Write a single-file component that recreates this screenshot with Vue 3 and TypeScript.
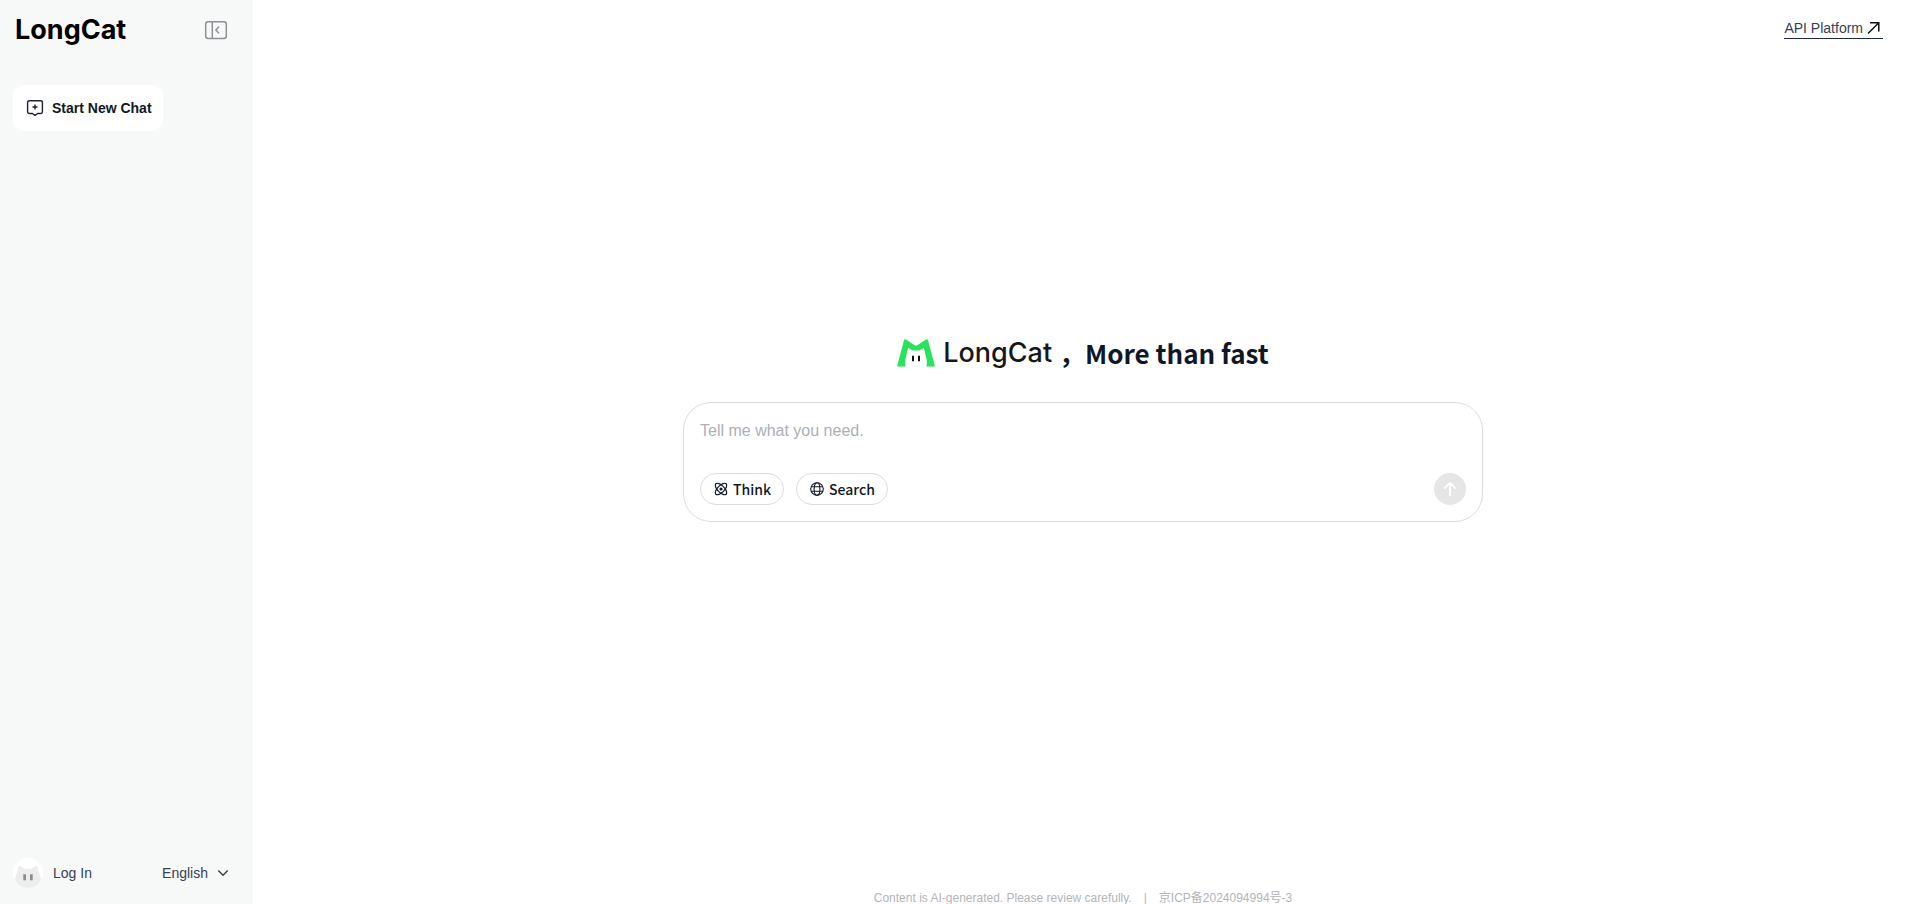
<script setup lang="ts">
import { ref } from 'vue'

const message = ref('')
const think = ref(false)
const search = ref(false)
</script>

<template>
  <div class="app">
    <aside class="sidebar">
      <header class="side-head">
        <a class="wordmark" href="#">LongCat</a>
        <button class="plain" type="button" aria-label="Collapse sidebar">
          <svg width="24" height="20" viewBox="0 0 24 20" fill="none" stroke="#8e9098" stroke-width="1.5">
            <rect x="1.7" y="1.7" width="20.6" height="16.8" rx="2.5" />
            <path d="M8.3 1.7v16.8" />
            <path d="M14.9 6.7l-3 3.3 3 3.3" />
          </svg>
        </button>
      </header>
      <button class="new-chat" type="button">
        <svg width="18" height="18" viewBox="0 0 18 18" fill="none" stroke="#1d2433" stroke-width="1.4" stroke-linejoin="round">
          <path d="M3.4 1.7h11.2a1.8 1.8 0 0 1 1.8 1.8v9.2a1.8 1.8 0 0 1-1.8 1.8h-3L9 16.4l-2.6-1.9h-3a1.8 1.8 0 0 1-1.8-1.8V3.5a1.8 1.8 0 0 1 1.8-1.8z" />
          <path d="M9 5.5v5M6.5 8h5" />
        </svg>
        <span>Start New Chat</span>
      </button>
      <footer class="side-foot">
        <button class="plain login" type="button">
          <svg width="30" height="30" viewBox="0 0 30 30">
            <defs>
              <clipPath id="avatar"><circle cx="15" cy="15" r="15" /></clipPath>
            </defs>
            <circle cx="15" cy="15" r="15" fill="#fff" />
            <g clip-path="url(#avatar)">
              <path d="M1 24L5.5 9.5Q6.3 6.8 8.5 8.7L11.3 10.7H18.5L22 8.2Q23.8 7 24.5 9.5L29 24L26 30H4z" fill="#ededee" />
            </g>
            <path d="M10.3 16.3h2.7v6h-2.7zM17 16.3h2.7v6H17z" fill="#8c8d91" />
          </svg>
          <span>Log In</span>
        </button>
        <button class="plain language" type="button">
          <span>English</span>
          <svg width="12" height="12" viewBox="0 0 12 12" fill="none" stroke="#384152" stroke-width="1.5">
            <path d="M1.3 3.5L6 8.2l4.7-4.7" />
          </svg>
        </button>
      </footer>
    </aside>

    <main class="main">
      <nav class="top">
        <a class="platform" href="#">
          <span>API Platform</span>
          <svg width="16" height="16" viewBox="0 0 16 16" fill="none" stroke="#111" stroke-width="1.5">
            <path d="M1 13.5L11.5 3M3 2.8h8.8v8.8" />
          </svg>
        </a>
      </nav>

      <section class="center">
        <h1 class="title">
          <svg width="38" height="28" viewBox="0 0 38 28">
            <path d="M0 27.5L7 1.3Q7.5-.3 9 .6L17.7 6.3Q19 7.2 20.3 6.3L29 .6Q30.5-.3 31 1.3L38 27.5H29.2Q30.8 23.5 29 18L26.9 8.7L22.5 11.6H15.5L11.1 8.7L9 18Q7.2 23.5 8.8 27.5z" fill="#29e35b" />
            <path d="M15 16.8h2v5.4h-2zM21 16.8h2v5.4h-2z" fill="#111" />
          </svg>
          <span class="brand">LongCat</span>
          <span class="slogan">，More than fast</span>
        </h1>

        <form class="composer" @submit.prevent>
          <textarea v-model="message" rows="1" aria-label="Message" placeholder="Tell me what you need."></textarea>
          <div class="tools">
            <button class="pill" type="button" :aria-pressed="think" @click="think = !think">
              <svg width="14" height="14" viewBox="1 1 22 22" fill="none" stroke="#101828" stroke-width="1.9">
                <path d="M20.2 20.2c2.04-2.03.02-7.36-4.5-11.9-4.54-4.52-9.87-6.54-11.9-4.5-2.04 2.03-.02 7.36 4.5 11.9 4.54 4.52 9.87 6.54 11.9 4.5Z" />
                <path d="M15.7 15.7c4.52-4.54 6.54-9.87 4.5-11.9-2.03-2.04-7.36-.02-11.9 4.5-4.52 4.54-6.54 9.87-4.5 11.9 2.03 2.04 7.36.02 11.9-4.5Z" />
                <circle cx="12" cy="12" r="1.5" fill="#101828" />
              </svg>
              <span>Think</span>
            </button>
            <button class="pill" type="button" :aria-pressed="search" @click="search = !search">
              <svg width="14" height="14" viewBox="0 0 14 14" fill="none" stroke="#101828" stroke-width="1.1">
                <circle cx="7" cy="7" r="6.3" />
                <ellipse cx="7" cy="7" rx="2.9" ry="6.3" />
                <path d="M1.2 4.7h11.6M1.2 9.3h11.6" />
              </svg>
              <span>Search</span>
            </button>
            <button class="send" type="submit" aria-label="Send">
              <svg width="16" height="16" viewBox="0 0 16 16" fill="none" stroke="#fff" stroke-width="1.8" stroke-linecap="round" stroke-linejoin="round">
                <path d="M8 14.5V2M2.7 7.2L8 2l5.3 5.2" />
              </svg>
            </button>
          </div>
        </form>
      </section>

      <footer class="legal">
        <span>Content is AI-generated. Please review carefully.</span>
        <span>|</span>
        <a href="#">京ICP备2024094994号-3</a>
      </footer>
    </main>
  </div>
</template>

<style>
body {
  margin: 0;
}
</style>

<style scoped>
.app {
  display: flex;
  height: 100vh;
  background: #fff;
  color: #101828;
  font: 14px/20px "Liberation Sans", "Noto Sans CJK SC", sans-serif;
}
button {
  font: inherit;
  color: inherit;
  cursor: pointer;
}
svg {
  display: block;
  flex: none;
}
a {
  color: inherit;
  text-decoration: none;
}
.plain {
  display: flex;
  align-items: center;
  padding: 0;
  border: 0;
  background: none;
}
.sidebar {
  box-sizing: border-box;
  flex: none;
  display: flex;
  flex-direction: column;
  align-items: flex-start;
  width: 253px;
  padding: 14px 24px 16px 13px;
  background: #f7f9f8;
}
.side-head,
.side-foot {
  display: flex;
  align-items: center;
  justify-content: space-between;
  align-self: stretch;
}
.side-head {
  padding: 0 1px 0 2px;
}
.wordmark {
  color: #000;
  font: 700 27px/32px Inter, sans-serif;
}
.new-chat {
  display: flex;
  align-items: center;
  gap: 8px;
  height: 46px;
  margin-top: 39px;
  padding: 0 11px 0 13px;
  border: 0;
  border-radius: 12px;
  background: #fff;
  font-weight: 700;
}
.side-foot {
  margin-top: auto;
  color: #364153;
}
.login {
  gap: 10px;
}
.language {
  gap: 9px;
}
.main {
  flex: 1;
  display: flex;
  flex-direction: column;
  align-items: center;
  min-width: 0;
  padding-left: 6px;
}
.top {
  display: flex;
  justify-content: flex-end;
  align-self: stretch;
  padding: 18px 24px 0 0;
}
.platform {
  display: flex;
  align-items: center;
  gap: 4px;
  border-bottom: 1px solid #1e2939;
  color: #364153;
}
.center {
  box-sizing: border-box;
  flex: 1;
  display: flex;
  flex-direction: column;
  align-items: center;
  justify-content: center;
  gap: 28px;
  width: 100%;
  padding-bottom: 78px;
}
.title {
  display: flex;
  align-items: center;
  margin: 0;
  font: 700 26px/42px "Noto Sans CJK SC", sans-serif;
}
.brand {
  margin: 0 7px 0 8px;
  color: #171717;
  font: 500 27px/42px Inter, sans-serif;
}
.composer {
  box-sizing: border-box;
  width: 800px;
  max-width: 90%;
  padding: 16px;
  border: 1px solid #dcdcde;
  border-radius: 28px;
}
textarea {
  display: block;
  box-sizing: border-box;
  width: 100%;
  height: 24px;
  margin-bottom: 30px;
  padding: 0;
  border: 0;
  outline: 0;
  resize: none;
  overflow: hidden;
  background: none;
  color: inherit;
  font: 16px/24px "Liberation Sans", sans-serif;
}
textarea::placeholder {
  color: #adb0b6;
}
.tools {
  display: flex;
  gap: 12px;
}
.pill {
  display: flex;
  align-items: center;
  gap: 5px;
  height: 32px;
  padding: 0 12px 0 13px;
  border: 1px solid #dcdcde;
  border-radius: 16px;
  background: #fff;
  font: 500 14px/20px "Noto Sans CJK SC", sans-serif;
}
.send {
  display: grid;
  place-items: center;
  width: 32px;
  height: 32px;
  margin-left: auto;
  padding: 0;
  border: 0;
  border-radius: 50%;
  background: #e6e6e6;
}
.legal {
  display: flex;
  gap: 12px;
  color: #b2b5ba;
  font-size: 12px;
  line-height: 12px;
}
</style>
